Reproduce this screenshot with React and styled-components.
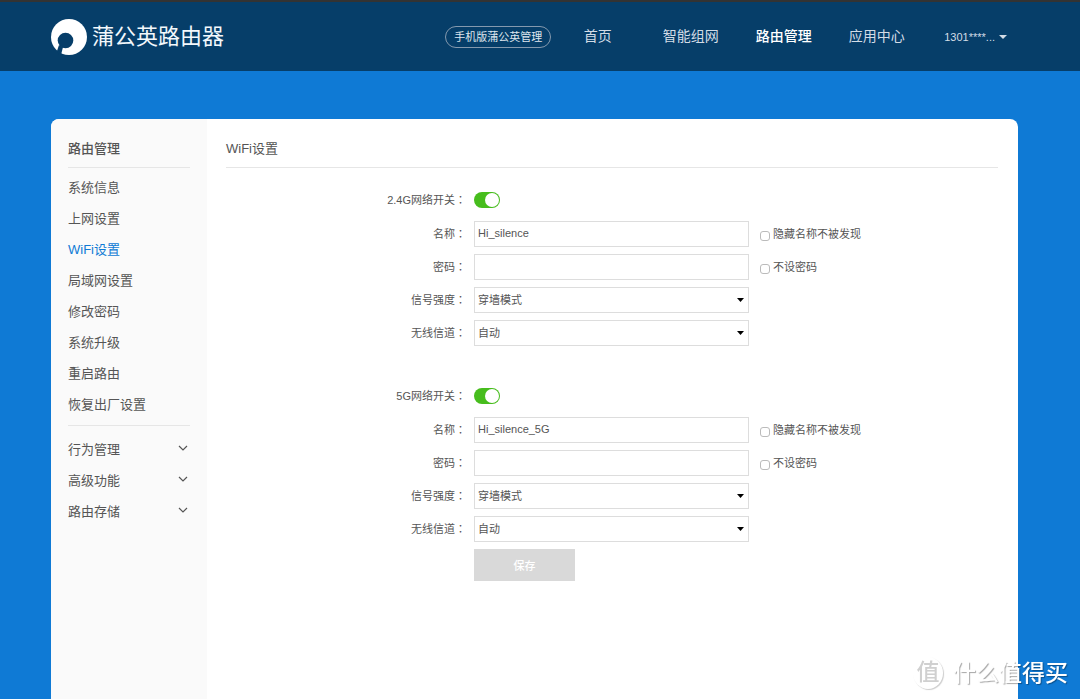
import React, { useState } from "react";
import styled, { createGlobalStyle, css } from "styled-components";

const Global = createGlobalStyle`
  *, *::before, *::after { box-sizing: border-box; }
  html, body { margin: 0; min-height: 100%; background: #0f7ad5; }
  body, button, input, select {
    font-family: "Liberation Sans", "Noto Sans CJK SC", sans-serif;
    color: #555;
  }
  body { font-size: 11px; overflow-x: hidden; }
`;

const Page = styled.div`
  display: flex;
  flex-direction: column;
  min-height: 100vh;
`;

const Header = styled.header`
  display: flex;
  align-items: center;
  justify-content: space-between;
  height: 71px;
  padding: 0 73px 0 51px;
  background: #063e69;
  border-top: 2px solid #333;
`;

const Brand = styled.a`
  display: flex;
  align-items: center;
  gap: 5px;
  color: #f3f8fc;
  font-size: 22px;
  line-height: 36px;
  font-weight: 400;
  text-decoration: none;
`;

const Nav = styled.nav`
  display: flex;
  align-items: center;
`;

const Pill = styled.a`
  height: 22px;
  padding: 0 8px;
  border: 1px solid #8499ae;
  border-radius: 11px;
  color: #dfe6ee;
  font-size: 11px;
  line-height: 20px;
  text-decoration: none;
`;

const NavLink = styled.a`
  width: 93px;
  padding-bottom: 2px;
  text-align: center;
  font-size: 14px;
  line-height: 20px;
  text-decoration: none;
  color: ${(p) => (p.$active ? "#fff" : "#d3dce6")};
  font-weight: ${(p) => (p.$active ? 500 : 400)};
`;

const Account = styled.button`
  display: flex;
  align-items: center;
  gap: 4px;
  margin-left: 21px;
  padding: 0;
  border: 0;
  background: none;
  color: #d3dce6;
  font-size: 11px;
  line-height: 20px;
`;

const Card = styled.div`
  flex: 1;
  display: flex;
  margin: 48px 62px 0 51px;
  background: #fff;
  border-radius: 8px 8px 0 0;
  overflow: hidden;
`;

const Sidebar = styled.aside`
  flex: 0 0 156px;
  padding: 10px 17px;
  background: #fafafa;
`;

const Title = styled.h2`
  margin: 0;
  height: 39px;
  border-bottom: 1px solid #e6e6e6;
  font-size: 13px;
  line-height: 40px;
  font-weight: ${(p) => (p.$strong ? 500 : 400)};
`;

const Menu = styled.ul`
  margin: 0;
  padding: ${(p) => (p.$groups ? "8px 0 0" : "4px 0 5px")};
  list-style: none;
  ${(p) => p.$groups && css`border-top: 1px solid #e6e6e6;`}
`;

const MenuLink = styled.a`
  display: block;
  font-size: 13px;
  line-height: 31px;
  text-decoration: none;
  color: ${(p) => (p.$active ? "#0f7ad5" : "#555")};
`;

const GroupButton = styled.button`
  display: flex;
  align-items: center;
  justify-content: space-between;
  width: 100%;
  padding: 0 2px 0 0;
  border: 0;
  background: none;
  font-size: 13px;
  line-height: 31px;
  & > svg { margin-bottom: 3px; }
`;

const Main = styled.main`
  flex: 1;
  min-width: 0;
  padding: 10px 20px 20px 19px;
`;

const Form = styled.form`
  padding-top: 20px;
`;

const Section = styled.section`
  display: flex;
  flex-direction: column;
  gap: 7px;
  margin-bottom: ${(p) => (p.$last ? "7px" : "38px")};
`;

const Row = styled.div`
  display: flex;
  align-items: center;
  height: 26px;
`;

const SwitchRow = styled(Row)`
  height: 24px;
  margin-bottom: 2px;
`;

const Label = styled.label`
  width: 240px;
  margin-right: 8px;
  padding-bottom: 1px;
  text-align: right;
  font-size: 11px;
  line-height: 20px;
`;

const Colon = styled.span`
  font-family: "Noto Sans CJK TC", sans-serif;
`;

const Switch = styled.input`
  appearance: none;
  display: flex;
  justify-content: flex-start;
  width: 26px;
  height: 16px;
  margin: 0;
  padding: 1px;
  border-radius: 8px;
  background: #ccc;
  &::before {
    content: "";
    width: 14px;
    height: 14px;
    border-radius: 50%;
    background: #fff;
  }
  &:checked { background: #47bd1d; justify-content: flex-end; }
`;

const field = css`
  width: 275px;
  height: 26px;
  border: 1px solid #ddd;
  border-radius: 0;
  background: #fff;
  font-size: 11px;
  outline: 0;
`;

const TextBox = styled.input`
  ${field}
  padding: 0 3px 2px;
`;

const SelectWrap = styled.div`
  display: grid;
  align-items: center;
  & > * { grid-area: 1 / 1; }
  & > svg { justify-self: end; margin-right: 5px; pointer-events: none; }
`;

const Select = styled.select`
  ${field}
  padding: 0 3px;
  appearance: none;
`;

const Check = styled.label`
  display: flex;
  align-items: center;
  gap: 3px;
  margin-left: 11px;
  padding-bottom: 1px;
  font-size: 11px;
  line-height: 20px;
`;

const CheckBox = styled.input`
  appearance: none;
  width: 10px;
  height: 10px;
  margin: 4px 0 0;
  border: 1px solid #bbb;
  border-radius: 3px;
  background: #fff;
  &:checked { background: #0f7ad5; }
`;

const Save = styled.button`
  width: 101px;
  height: 32px;
  margin-left: 248px;
  border: 0;
  background: #d9d9d9;
  color: #fff;
  font-size: 11px;
  font-weight: 500;
`;

const Watermark = styled.div`
  position: fixed;
  right: 12px;
  bottom: 8px;
  display: flex;
  align-items: center;
  gap: 10px;
  color: #fff;
  font-size: 23px;
  line-height: 36px;
  font-weight: 500;
  text-shadow: 1px 1px 1px rgba(0, 0, 0, 0.35);
  pointer-events: none;
`;

const Seal = styled.span`
  width: 30px;
  height: 32px;
  border-radius: 50%;
  box-shadow: 1px 1px 1px rgba(0, 0, 0, 0.2);
  color: #d0d0d0;
  text-align: center;
  text-shadow: none;
  font-size: 23px;
  font-weight: 500;
  line-height: 30px;
`;

const Logo = () => (
  <svg width="36" height="36" viewBox="0 0 36 36" aria-hidden="true">
    <circle cx="18" cy="18" r="18" fill="#fff" />
    <circle cx="14.500" cy="21.500" r="7.800" fill="#063e69" />
    <path d="M8 26L6 32L8 36H10L12 28Z" fill="#063e69" />
  </svg>
);

const Triangle = ({ color, size = 8 }) => (
  <svg width={size} height="4" viewBox="0 0 8 4" preserveAspectRatio="none" aria-hidden="true">
    <path d="M0 0H8L4 4Z" fill={color} />
  </svg>
);

const Chevron = () => (
  <svg width="10" height="6" viewBox="0 0 10 6" fill="none" stroke="#555" strokeWidth="1.200" aria-hidden="true">
    <path d="M1 1L5 5L9 1" />
  </svg>
);

const pages = ["系统信息", "上网设置", "WiFi设置", "局域网设置", "修改密码", "系统升级", "重启路由", "恢复出厂设置"];
const groups = ["行为管理", "高级功能", "路由存储"];
const nav = ["首页", "智能组网", "路由管理", "应用中心"];

const FieldLabel = ({ id, children }) => (
  <Label htmlFor={id}>{children}<Colon>：</Colon></Label>
);

const SelectField = ({ id, options }) => (
  <SelectWrap>
    <Select id={id}>{options.map((o) => <option key={o}>{o}</option>)}</Select>
    <Triangle color="#000" size={7} />
  </SelectWrap>
);

function Band({ id, name, ssid, last }) {
  const [on, setOn] = useState(true);
  return (
    <Section $last={last}>
      <SwitchRow>
        <FieldLabel id={`${id}-on`}>{name}网络开关</FieldLabel>
        <Switch id={`${id}-on`} type="checkbox" role="switch" checked={on} onChange={() => setOn(!on)} />
      </SwitchRow>
      <Row>
        <FieldLabel id={`${id}-ssid`}>名称</FieldLabel>
        <TextBox id={`${id}-ssid`} defaultValue={ssid} />
        <Check><CheckBox type="checkbox" />隐藏名称不被发现</Check>
      </Row>
      <Row>
        <FieldLabel id={`${id}-key`}>密码</FieldLabel>
        <TextBox id={`${id}-key`} type="password" />
        <Check><CheckBox type="checkbox" />不设密码</Check>
      </Row>
      <Row>
        <FieldLabel id={`${id}-power`}>信号强度</FieldLabel>
        <SelectField id={`${id}-power`} options={["穿墙模式"]} />
      </Row>
      <Row>
        <FieldLabel id={`${id}-channel`}>无线信道</FieldLabel>
        <SelectField id={`${id}-channel`} options={["自动"]} />
      </Row>
    </Section>
  );
}

export default function App() {
  return (
    <Page>
      <Global />
      <Header>
        <Brand href="#"><Logo />蒲公英路由器</Brand>
        <Nav>
          <Pill href="#">手机版蒲公英管理</Pill>
          {nav.map((n) => <NavLink key={n} href="#" $active={n === "路由管理"}>{n}</NavLink>)}
          <Account type="button">1301****...<Triangle color="#d3dce6" /></Account>
        </Nav>
      </Header>
      <Card>
        <Sidebar>
          <Title $strong>路由管理</Title>
          <Menu>
            {pages.map((p) => (
              <li key={p}><MenuLink href="#" $active={p === "WiFi设置"}>{p}</MenuLink></li>
            ))}
          </Menu>
          <Menu $groups>
            {groups.map((g) => (
              <li key={g}><GroupButton type="button">{g}<Chevron /></GroupButton></li>
            ))}
          </Menu>
        </Sidebar>
        <Main>
          <Title>WiFi设置</Title>
          <Form onSubmit={(e) => e.preventDefault()}>
            <Band id="band24" name="2.4G" ssid="Hi_silence" />
            <Band id="band5" name="5G" ssid="Hi_silence_5G" last />
            <Save type="submit">保存</Save>
          </Form>
        </Main>
      </Card>
      <Watermark><Seal>值</Seal>什么值得买</Watermark>
    </Page>
  );
}
